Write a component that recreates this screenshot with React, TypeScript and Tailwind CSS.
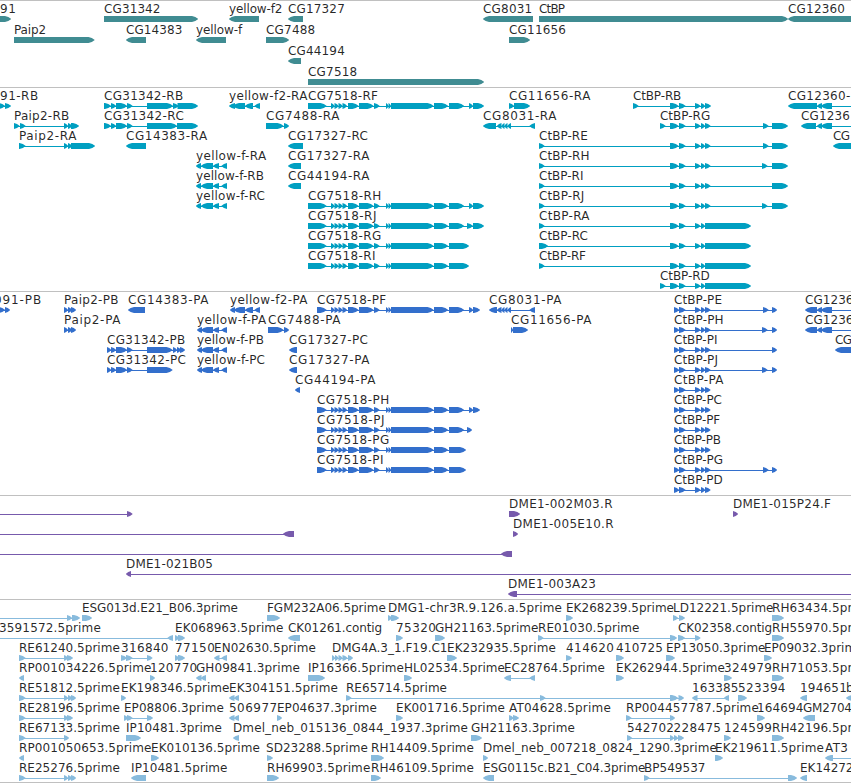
import React from 'react';

type Seg = [number, number];

interface Feature {
  row: number;
  label: string;
  x: number;
  // right edge of the label
  end: number;
  segs: Seg[];
  reverse?: boolean;
}

interface TrackProps {
  features: Feature[];
  className: string;
  rowHeight?: number;
}

const R = (row: number, label: string, x: number, end: number, ...segs: Seg[]): Feature => ({ row, label, x, end, segs });
const L = (row: number, label: string, x: number, end: number, ...segs: Seg[]): Feature => ({ row, label, x, end, segs, reverse: true });

// Start and end beyond the visible region, for features that run off the edge
const OFF_LEFT: Seg = [-20, -15];
const OFF_RIGHT: Seg = [865, 870];

// Exons shared between transcripts of the same gene
const cg7518: Seg[] = [
  [331, 334.5], [334.5, 338.5], [338.5, 342.5], [342.5, 347], [348, 358.5], [359, 373.5],
  [374, 379.5], [386, 388.5], [388.5, 391], [391, 433.5], [434, 448],
];
const ctbpMid: Seg[] = [[670, 678.5], [679, 685.5], [695, 700.5], [701, 705]];
const ctbpCds: Seg[] = [[674, 679], [679, 685.5], [695, 700.5], [701, 705], [705, 710.5]];
const yellowF: Seg[] = [[201, 213], [213, 219], [221.5, 227]];
const cg31342: Seg[] = [[111, 116], [116, 127], [127, 132.5]];
const cg8031: Seg[] = [[497, 501.5], [501.5, 504.5], [504.5, 507.5], [507.5, 511], [529.5, 535]];
const cg12360: Seg[] = [[817, 822], [821, 832], OFF_RIGHT];

const genes: Feature[] = [
  R(0, '91', 0, 15.5, [-20, 11]),
  R(0, 'CG31342', 104, 160, [104, 198]),
  L(0, 'yellow-f2', 229, 282, [229, 259]),
  L(0, 'CG17327', 288, 344.3, [288, 303]),
  L(0, 'CG8031', 483, 531.7, [483, 533]),
  R(0, 'CtBP', 539, 564.5, [539, 788]),
  L(0, 'CG12360', 788, 844.5, [788, 870]),
  R(1, 'Paip2', 14, 45.7, [14, 94.5]),
  L(1, 'CG14383', 126, 181.8, [126, 146]),
  L(1, 'yellow-f', 196, 241.7, [196, 226]),
  R(1, 'CG7488', 266, 314.7, [266, 289]),
  R(1, 'CG11656', 509, 565.5, [509, 530]),
  L(2, 'CG44194', 288, 344.3, [288, 301]),
  R(3, 'CG7518', 308, 356.7, [308, 484]),
];

const transcripts: Feature[] = [
  R(0, '91-RB', 0, 37.7, [-1, 5], [5, 11]),
  R(0, 'CG31342-RB', 104, 182.7, [104, 111], ...cg31342, [147, 173], [173, 178.5], [177.5, 198]),
  L(0, 'yellow-f2-RA', 229, 307, [229, 235], [233, 245], [245, 253], [254.5, 260]),
  R(0, 'CG7518-RF', 308, 377.5, [308, 326.5], ...cg7518, [449, 464], [469, 473], [473, 484]),
  R(0, 'CG11656-RA', 509, 590, [509, 514], [514, 530]),
  R(0, 'CtBP-RB', 633, 680.8, [633, 638.5], ...ctbpMid, [705, 711]),
  L(0, 'CG12360-RB', 788, 867, [788, 817], ...cg12360),
  R(1, 'Paip2-RB', 14, 68.7, [14, 19.5], [20, 25.5], [64, 68], [68, 72], [71, 79]),
  R(1, 'CG31342-RC', 104, 183.3, [104, 111], ...cg31342, [147, 177], [177, 198]),
  R(1, 'CG7488-RA', 266, 339, [266, 283.5], [284, 289]),
  L(1, 'CG8031-RA', 483, 556, [483, 496], ...cg8031),
  R(1, 'CtBP-RG', 660, 709.7, [660, 665.5], ...ctbpMid, [705, 710.5], [763, 768.5], [772, 788]),
  L(1, 'CG1236', 801, 849.3, [801, 816], ...cg12360),
  R(2, 'Paip2-RA', 19, 76, [19, 25.5], [64, 68], [68, 72], [71, 95]),
  L(2, 'CG14383-RA', 126, 206.7, [126, 146]),
  L(2, 'CG17327-RC', 288, 367.5, [288, 303]),
  R(2, 'CtBP-RE', 539, 587.3, [539, 544.5], ...ctbpMid, [705, 710.5], [763, 768.5], [772, 788]),
  L(2, 'CG', 833, 849.5, [833, 870]),
  L(3, 'yellow-f-RA', 196, 265.7, [196, 201], ...yellowF),
  L(3, 'CG17327-RA', 288, 369, [288, 301]),
  R(3, 'CtBP-RH', 539, 589, [539, 544.5], ...ctbpMid, [705, 710.5], [762, 767.5], [772, 788]),
  L(4, 'yellow-f-RB', 196, 263.5, [196, 201], ...yellowF),
  L(4, 'CG44194-RA', 288, 369, [288, 301]),
  R(4, 'CtBP-RI', 539, 583, [539, 544.5], ...ctbpMid, [705, 710.5], [772, 788]),
  L(5, 'yellow-f-RC', 196, 264.5, [196, 201], ...yellowF),
  R(5, 'CG7518-RH', 308, 380.7, [308, 326.5], ...cg7518, [449, 464], [469, 473], [473, 484]),
  R(5, 'CtBP-RJ', 539, 583.7, [539, 544.5], ...ctbpMid, [705, 710.5], [762, 767.5], [772, 788]),
  R(6, 'CG7518-RJ', 308, 376, [308, 326.5], ...cg7518, [449, 464], [467, 473], [473, 484]),
  R(6, 'CtBP-RA', 539, 589, [539, 544.5], ...ctbpMid, [705, 751]),
  R(7, 'CG7518-RG', 308, 380.7, [308, 326.5], ...cg7518, [449, 469]),
  R(7, 'CtBP-RC', 539, 587.3, [539, 548], ...ctbpMid, [705, 751]),
  R(8, 'CG7518-RI', 308, 375, [308, 326.5], ...cg7518, [449, 469]),
  R(8, 'CtBP-RF', 539, 585.5, [539, 544.5], ...ctbpMid, [705, 751]),
  R(9, 'CtBP-RD', 660, 709.3, [660, 665.5], ...ctbpMid, [705, 751]),
];

const proteins: Feature[] = [
  R(0, '091-PB', -6, 40.7, [-1, 5], [5, 10]),
  R(0, 'Paip2-PB', 64, 118, [64, 68], [68, 72], [71, 76]),
  L(0, 'CG14383-PA', 128, 208, [128, 145]),
  L(0, 'yellow-f2-PA', 230, 307, [230, 235], [234, 245], [245, 253], [254.5, 260]),
  R(0, 'CG7518-PF', 317, 385.7, [317, 326.5], ...cg7518, [449, 464], [469, 473], [473, 480]),
  L(0, 'CG8031-PA', 489, 561, [489, 497], ...cg8031),
  R(0, 'CtBP-PE', 674, 721.5, ...ctbpCds, [763, 768.5], [772, 777]),
  L(0, 'CG1236', 805, 853, [805, 817], ...cg12360),
  R(1, 'Paip2-PA', 64, 120, [64, 68], [68, 72], [71, 76]),
  L(1, 'yellow-f-PA', 197, 265.7, [197, 202], ...yellowF),
  R(1, 'CG7488-PA', 268, 340, [268, 283.5], [284, 289]),
  R(1, 'CG11656-PA', 511, 591, [511, 513], [513, 528]),
  R(1, 'CtBP-PH', 674, 723, ...ctbpCds, [762, 767.5], [772, 777]),
  L(1, 'CG1236', 805, 853, [805, 817], ...cg12360),
  R(2, 'CG31342-PB', 107, 184.7, [107, 111], ...cg31342, [147, 172.5], [173, 177], [177, 181], [180, 185]),
  L(2, 'yellow-f-PB', 197, 263.5, [197, 202], ...yellowF),
  L(2, 'CG17327-PC', 289, 367.5, [289, 297]),
  R(2, 'CtBP-PI', 674, 717, ...ctbpCds, [772, 777]),
  L(2, 'CG', 835, 851.5, [835, 870]),
  R(3, 'CG31342-PC', 107, 185.5, [107, 111], ...cg31342, [147, 172.5]),
  L(3, 'yellow-f-PC', 197, 264.5, [197, 202], ...yellowF),
  L(3, 'CG17327-PA', 289, 369, [289, 297]),
  R(3, 'CtBP-PJ', 674, 717.5, ...ctbpCds, [762, 767.5], [772, 777]),
  L(4, 'CG44194-PA', 295, 375, [295, 300]),
  R(4, 'CtBP-PA', 674, 723, ...ctbpCds),
  R(5, 'CG7518-PH', 317, 388.7, [317, 326.5], ...cg7518, [449, 464], [469, 473], [473, 480]),
  R(5, 'CtBP-PC', 674, 721.5, ...ctbpCds),
  R(6, 'CG7518-PJ', 317, 384, [317, 326.5], ...cg7518, [449, 464], [467, 472]),
  R(6, 'CtBP-PF', 674, 719.7, ...ctbpCds),
  R(7, 'CG7518-PG', 317, 388.7, [317, 326.5], ...cg7518, [449, 466]),
  R(7, 'CtBP-PB', 674, 720.5, ...ctbpCds),
  R(8, 'CG7518-PI', 317, 383, [317, 326.5], ...cg7518, [449, 466]),
  R(8, 'CtBP-PG', 674, 722.5, ...ctbpCds, [763, 768.5], [772, 777]),
  R(9, 'CtBP-PD', 674, 722.3, ...ctbpCds),
];

const bacs: Feature[] = [
  R(0, '', 0, 0, OFF_LEFT, [127, 132.5]),
  R(0, 'DME1-002M03.R', 509, 612, [509, 520]),
  R(0, 'DME1-015P24.F', 733, 830.5, [733, 738]),
  L(1, '', 0, 0, OFF_LEFT, [283, 294]),
  R(1, 'DME1-005E10.R', 513, 613, [513, 518]),
  L(2, '', 0, 0, OFF_LEFT, [501, 512]),
  L(3, 'DME1-021B05', 126, 212.5, [126, 131], OFF_RIGHT),
  L(4, 'DME1-003A23', 508, 595.5, [508, 517], OFF_RIGHT),
];

const ests: Feature[] = [
  R(0, '', 0, 0, OFF_LEFT, [67, 72], [72, 80]),
  R(0, 'ESG013d.E21_B06.3prime', 82, 237.5, [82, 92]),
  R(0, 'FGM232A06.5prime', 267, 385.3, [267, 280]),
  R(0, 'DMG1-chr3R.9.126.a.5prime', 388, 561.5, [388, 392], [391, 399]),
  R(0, 'EK268239.5prime', 566, 673.5, [566, 573]),
  R(0, 'LD12221.5prime', 673, 773, [673, 678], [679, 685]),
  R(0, 'RH63434.5prime', 772, 874.5, [772, 784]),
  L(1, '3591572.5prime', -1, 100.3, OFF_LEFT, [167.5, 173]),
  R(1, 'EK068963.5prime', 175, 283, [175, 179], [178, 185]),
  L(1, 'CK01261.contig', 288, 381.7, [288, 300]),
  R(1, '75320', 396, 435.5, [396, 403]),
  R(1, 'GH21163.5prime', 435, 538, [435, 445]),
  R(1, 'RE01030.5prime', 538, 639, [538, 543.5], [670, 677]),
  R(1, 'CK02358.contig', 678, 771.7, [678, 685], [695, 700.5]),
  R(1, 'RH55970.5prime', 772, 874.5, [772, 784]),
  R(2, 'RE61240.5prime', 19, 119.3, [19, 25.5], [64, 68], [67, 73]),
  R(2, '316840', 121, 168, [121, 127], [126, 132.5], [147, 152.5]),
  R(2, '77150', 175, 214.3, [175, 179], [178, 185]),
  L(2, 'EN02630.5prime', 214, 315.3, [214, 219.5], [221.5, 227]),
  R(2, 'DMG4A.3_1.F19.C1', 332, 447, [332, 335], [335, 338.5], [338.5, 342.5], [342.5, 347.5], [348, 353]),
  R(2, 'EK232935.5prime', 447, 555.3, [447, 457]),
  R(2, '414620', 566, 613.5, [566, 572]),
  R(2, '410725', 616, 662.5, [616, 624]),
  R(2, 'EP13050.3prime', 666, 765, [666, 675]),
  R(2, 'EP09032.3prime', 764, 863, [764, 772]),
  L(3, 'RP001034226.5prime', 19, 151, [19, 24]),
  R(3, '120770', 150, 196.7, [150, 155]),
  L(3, 'GH09841.3prime', 196, 299.3, [196, 201.5], [201, 206]),
  R(3, 'IP16366.5prime', 308, 403.5, [308, 325]),
  R(3, 'HL02534.5prime', 404, 504.5, [404, 412]),
  L(3, 'EC28764.5prime', 504, 604.3, [504, 511], [529.5, 535]),
  R(3, 'EK262944.5prime', 616, 724.5, [616, 624]),
  R(3, '324979', 724, 771.5, [724, 732]),
  R(3, 'RH71053.5prime', 772, 874.5, [772, 784]),
  R(4, 'RE51812.5prime', 19, 119.3, [19, 25.5], [64, 68], [68, 72], [71, 76]),
  R(4, 'EK198346.5prime', 121, 229, [121, 126]),
  L(4, 'EK304151.5prime', 229, 337.3, [229, 234.5], [234, 239]),
  R(4, 'RE65714.5prime', 346, 446.5, [346, 351.5], [540, 545.5], [670, 678], [678.5, 684]),
  L(4, '163385', 692, 738, [692, 697.5], [724, 729]),
  R(4, '523394', 738, 785, [738, 747]),
  L(4, '194651', 800, 846.3, [800, 807]),
  L(4, 'b', 846, 853, [846, 870]),
  R(5, 'RE28196.5prime', 19, 119.3, [19, 25.5], [64, 68], [67, 73]),
  R(5, 'EP08806.3prime', 124, 223.3, [124, 128], [127, 132.5], [147, 153]),
  L(5, '506977', 229, 276.7, [229, 234.5], [234, 239]),
  R(5, 'EP04637.3prime', 277, 376.3, [277, 282]),
  R(5, 'EK001716.5prime', 396, 504.3, [396, 403]),
  R(5, 'AT04628.5prime', 509, 610.3, [509, 513.5], [513, 519]),
  R(5, 'RP004457787.5prime', 626, 758.3, [626, 631.5], [670, 675]),
  R(5, '164694', 757, 803, [757, 765]),
  L(5, 'GM2704', 803, 851.5, [803, 815]),
  R(6, 'RE67133.5prime', 19, 119.3, [19, 25.5], [64, 69]),
  R(6, 'IP10481.3prime', 126, 221.5, [126, 141]),
  L(6, 'Dmel_neb_015136_0844_1937.3prime', 233, 467.5, [233, 239]),
  R(6, 'GH21163.3prime', 471, 574.3, [471, 482]),
  R(6, '542702', 627, 673.5, [627, 632], [670, 674], [674, 678], [678, 684]),
  R(6, '228475', 673.5, 720.5),
  R(6, '124599', 724, 771.5, [724, 731]),
  R(6, 'RH42196.5prime', 772, 874.5, [772, 784]),
  L(7, 'RP001050653.5prime', 19, 151, [19, 24]),
  R(7, 'EK010136.5prime', 151, 259.3, [151, 159]),
  R(7, 'SD23288.5prime', 266, 367.3, [267, 273]),
  R(7, 'RH14409.5prime', 371, 473.5, [371, 384]),
  R(7, 'Dmel_neb_007218_0824_1290.3prime', 483, 716.3, [483, 488]),
  R(7, 'EK219611.5prime', 715, 823.3, [715, 723]),
  L(7, 'AT3', 825, 847.5, [825, 833], OFF_RIGHT),
  R(8, 'RE25276.5prime', 19, 119.3, [19, 25.5], [64, 68], [68, 72], [71, 76]),
  L(8, 'IP10481.5prime', 131, 227, [131, 146]),
  R(8, 'RH69903.5prime', 267, 369.8, [267, 279]),
  R(8, 'RH46109.5prime', 371, 473.5, [371, 381]),
  L(8, 'ESG0115c.B21_C04.3prime', 483, 645, [483, 494]),
  R(8, 'BP549537', 644, 705, [644, 649.5], [788, 797]),
  L(8, 'EK14272', 800, 853, [800, 807]),
];

// One exon: a 6px bar with a rounded taper in the reading direction
const arrowPoints = ([a, b]: Seg, top: number, reverse?: boolean) => {
  const tip = reverse ? a : b;
  const tail = reverse ? b : a;
  const dir = reverse ? -1 : 1;
  const head = Math.min(6, b - a);
  const neck = tip - dir * head;
  const bulge = tip - dir * head * 0.45;
  return [
    [tail, top], [neck, top], [bulge, top + 1.1], [tip, top + 2.7], [tip, top + 3.3],
    [bulge, top + 4.9], [neck, top + 6], [tail, top + 6],
  ].map((p) => p.join(',')).join(' ');
};

function Track({ features, className, rowHeight = 20 }: TrackProps) {
  return (
    <section className={`w-full shrink-0 overflow-hidden border-t border-[#c0c0c0] ${className}`}>
      <svg className="block h-full w-full overflow-visible" fill="currentColor">
        {features.map((feature, i) => {
          const y = feature.row * rowHeight;
          const top = y + 15;
          const { segs } = feature;
          return (
            <g key={i}>
              {segs.length > 1 && (
                <rect x={segs[0][0] + 2} y={top + 3} width={segs[segs.length - 1][1] - segs[0][0] - 4} height={1} />
              )}
              {segs.map((seg, j) => (
                <polygon key={j} points={arrowPoints(seg, top, feature.reverse)} />
              ))}
              {feature.label && (
                <text
                  x={feature.x}
                  y={y + 12}
                  textLength={feature.end - feature.x + 0.5}
                  className="fill-black/85 text-[12px]"
                >
                  {feature.label}
                </text>
              )}
            </g>
          );
        })}
      </svg>
    </section>
  );
}

function App() {
  return (
    <main className="flex h-[783px] w-[851px] flex-col overflow-hidden bg-white font-['DejaVu_Sans',sans-serif]">
      <Track features={genes} rowHeight={21} className="h-[87px] text-[#408c92]" />
      <Track features={transcripts} className="h-[204px] text-[#009fc1]" />
      <Track features={proteins} className="h-[204px] text-[#336fcc]" />
      <Track features={bacs} className="h-[104px] text-[#775aac]" />
      <Track features={ests} className="h-[183px] text-[#88bbdd]" />
      <div className="h-px shrink-0 bg-[#c0c0c0]" />
    </main>
  );
}

export default App;
